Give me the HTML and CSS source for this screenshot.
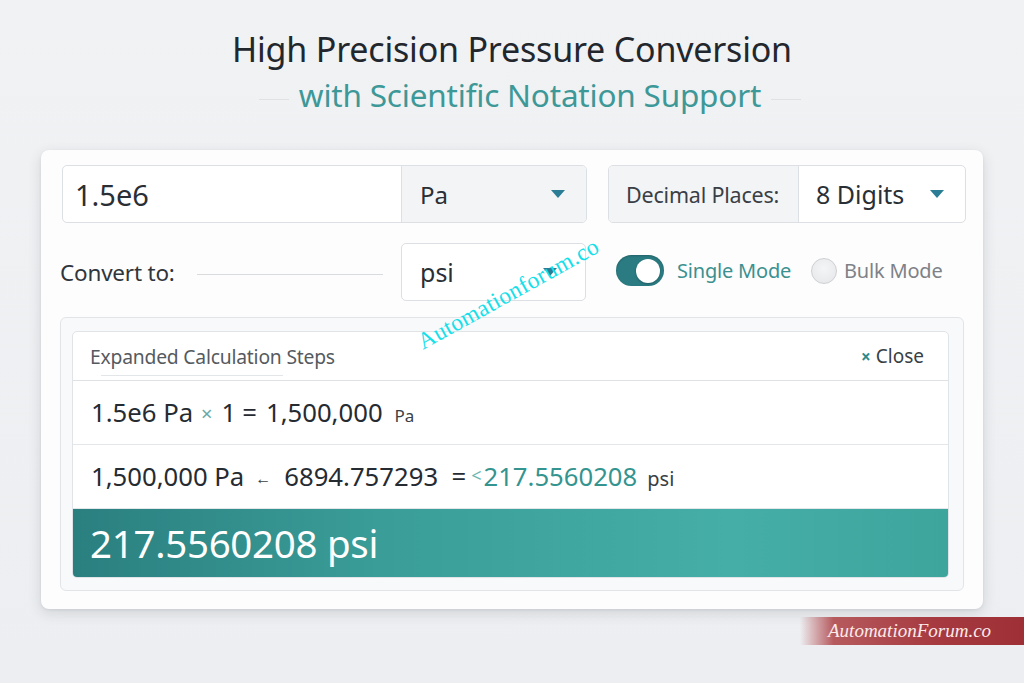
FILE: index.html
```html
<!DOCTYPE html>
<html>
<head>
<meta charset="utf-8">
<link rel="stylesheet" href="styles.css">
</head>
<body>
<header class="head">
  <h1 class="title">High Precision Pressure Conversion</h1>
  <div class="subtitle"><span class="sub-line"></span><span>with Scientific Notation Support</span><span class="sub-line"></span></div>
</header>

<main class="card">
  <div class="grid">
    <div class="field input-group">
      <div class="value-input">1.5e6</div>
      <div class="unit-select"><span>Pa</span><span class="tri"></span></div>
    </div>
    <div class="field decimal-group">
      <div class="dec-label">Decimal Places:</div>
      <div class="dec-value"><span>8 Digits</span><span class="tri"></span></div>
    </div>

    <div class="convert-row">
      <span class="convert-label">Convert to:</span>
      <span class="convert-line"></span>
      <div class="field psi-select"><span>psi</span><span class="tri"></span></div>
    </div>
    <div class="mode-row">
      <span class="toggle"><span class="knob"></span></span>
      <span class="mode-on">Single Mode</span>
      <span class="radio"></span>
      <span class="mode-off">Bulk Mode</span>
    </div>
  </div>

  <section class="panel">
    <div class="steps">
      <div class="steps-head">
        <span class="steps-title">Expanded Calculation Steps</span>
        <span class="close"><span class="close-x">×</span> Close</span>
      </div>
      <div class="step">1.5e6 Pa<span class="op">×</span>1<span class="eq">=</span>1,500,000<small>Pa</small></div>
      <div class="step">1,500,000 Pa<span class="op-dark">←</span>6894.757293 &nbsp;=<span class="lt">&lt;</span><span class="teal">217.5560208</span><small class="psi-small">psi</small></div>
      <div class="result">217.5560208 psi</div>
    </div>
  </section>

  <div class="watermark">Automationforum.co</div>
</main>

<div class="badge">AutomationForum.co</div>
</body>
</html>
```

FILE: styles.css
```css
* { box-sizing: border-box; }
html, body { margin: 0; padding: 0; }
body {
  width: 1024px;
  height: 683px;
  overflow: hidden;
  background: linear-gradient(180deg, #f1f2f4 0%, #eceef1 100%);
  font-family: "Noto Sans", "Open Sans", sans-serif;
  color: #2b3038;
  position: relative;
}
.head {
  padding-top: 26px;
  text-align: center;
}
.title {
  margin: 0;
  font-weight: 400;
  font-size: 34px;
  line-height: 46px;
  color: #22272e;
  letter-spacing: -0.2px;
}
.subtitle {
  display: flex;
  justify-content: center;
  align-items: center;
  gap: 10px;
  font-size: 31.5px;
  line-height: 42px;
  color: #3d9898;
  margin-top: 2px;
  padding-left: 36px;
  letter-spacing: -0.2px;
}
.sub-line {
  width: 30px;
  height: 1px;
  background: #dfe2e5;
  margin-top: 8px;
}
.card {
  position: relative;
  margin: 34px 41px 0 41px;
  height: 459px;
  background: #fdfdfd;
  border-radius: 8px;
  box-shadow: 0 4px 14px rgba(40, 50, 60, 0.14), 0 1px 3px rgba(40, 50, 60, 0.08);
  padding: 15px 19px 0 19px;
}
.grid {
  display: grid;
  grid-template-columns: 525px 358px;
  column-gap: 21px;
  row-gap: 20px;
  padding-left: 2px;
}
.field {
  border: 1px solid #dcdfe3;
  border-radius: 5px;
  background: #fff;
  display: flex;
  align-items: center;
  height: 58px;
}
.input-group { overflow: hidden; }
.value-input {
  flex: 0 0 339px;
  height: 100%;
  display: flex;
  align-items: center;
  padding-left: 12px;
  font-size: 29px;
  color: #2a2f36;
  border-right: 1px solid #dcdfe3;
}
.unit-select {
  flex: 1;
  height: 100%;
  background: #f3f4f6;
  display: flex;
  align-items: center;
  justify-content: space-between;
  padding: 0 21px 0 18px;
  font-size: 24px;
  color: #2a2f36;
}
.tri {
  width: 0;
  height: 0;
  border-left: 7px solid transparent;
  border-right: 7px solid transparent;
  border-top: 8px solid #2b7d96;
}
.decimal-group { overflow: hidden; }
.dec-label {
  flex: 0 0 190px;
  height: 100%;
  background: #f3f4f6;
  border-right: 1px solid #dcdfe3;
  display: flex;
  align-items: center;
  padding-left: 17px;
  font-size: 21.5px;
  color: #3a3f46;
  letter-spacing: -0.2px;
}
.dec-value {
  flex: 1;
  height: 100%;
  display: flex;
  align-items: center;
  justify-content: space-between;
  padding: 0 21px 0 17px;
  font-size: 25px;
  color: #2a2f36;
}
.convert-row {
  display: flex;
  align-items: center;
  margin-left: -2px;
}
.convert-label {
  font-size: 22.5px;
  color: #30353c;
  width: 137px;
  letter-spacing: -0.2px;
}
.convert-line {
  width: 186px;
  height: 1px;
  background: #d9dcdf;
  margin-top: 4px;
}
.psi-select {
  margin-left: 18px;
  width: 185px;
  height: 58px;
  justify-content: space-between;
  padding: 0 28px 0 18px;
  font-size: 25px;
  color: #2a2f36;
}
.mode-row {
  display: flex;
  align-items: center;
  padding-left: 8px;
  margin-top: -3px;
}
.toggle {
  width: 48px;
  height: 31px;
  border-radius: 16px;
  background: #2a7b82;
  display: flex;
  align-items: center;
  justify-content: flex-end;
  padding-right: 4px;
  box-shadow: inset 0 1px 2px rgba(0,0,0,0.2);
}
.knob {
  width: 24px;
  height: 24px;
  border-radius: 50%;
  background: #fff;
  box-shadow: 0 1px 2px rgba(0,0,0,0.25);
}
.mode-on {
  margin-left: 13px;
  font-size: 20px;
  color: #3a9190;
  letter-spacing: -0.2px;
}
.radio {
  margin-left: 20px;
  width: 26px;
  height: 26px;
  border-radius: 50%;
  border: 1.5px solid #cdd0d3;
  background: radial-gradient(circle at 50% 40%, #f4f5f6 0%, #e4e6e8 100%);
}
.mode-off {
  margin-left: 7px;
  font-size: 20px;
  color: #7d8288;
  letter-spacing: -0.2px;
}
.panel {
  margin-top: 16px;
  width: 904px;
  height: 274px;
  border: 1px solid #e2e5e8;
  border-radius: 6px;
  background: #f8f9fa;
  padding: 13px 14px 0 11px;
}
.steps {
  background: #fff;
  border: 1px solid #e1e4e7;
  border-radius: 5px;
  overflow: hidden;
  height: 247px;
  display: flex;
  flex-direction: column;
}
.steps-head {
  height: 49px;
  flex: 0 0 49px;
  display: flex;
  align-items: center;
  justify-content: space-between;
  padding: 0 24px 0 17px;
  border-bottom: 1px solid #dfe2e5;
  position: relative;
}
.steps-head::after {
  content: "";
  position: absolute;
  left: 28px;
  width: 182px;
  bottom: 4px;
  height: 1px;
  background: #e3e6e8;
}
.steps-title {
  font-size: 19.3px;
  color: #555a60;
  letter-spacing: -0.2px;
}
.close {
  font-size: 19px;
  color: #3a3f45;
}
.close-x {
  color: #2d8a8a;
  font-size: 17px;
  font-weight: 700;
}
.step {
  flex: 0 0 64px;
  height: 64px;
  display: flex;
  align-items: center;
  padding-left: 18px;
  font-size: 25.7px;
  color: #262b32;
  border-bottom: 1px solid #e4e7ea;
  white-space: pre;
  letter-spacing: 0;
}
.eq { margin: 0 9px 0 6px; }
.step small {
  font-size: 17px;
  margin-left: 12px;
  margin-top: 5px;
  color: #3a3f46;
}
.step small.psi-small { font-size: 20px; margin-left: 10px; margin-top: 4px; }
.op { color: #6aa9a6; font-size: 20px; margin: 2px 9px 0 8px; }
.op-dark { color: #3a3f46; font-size: 16px; margin: 2px 13px 0 11px; }
.lt { color: #6db5b0; font-size: 18px; margin: 0 2px 4px 5px; }
.teal { color: #34948f; }
.result {
  flex: 1;
  display: flex;
  align-items: center;
  padding-left: 17px;
  font-size: 38.5px;
  color: #ffffff;
  background: linear-gradient(90deg, #2a7f7f 0%, #3a9d98 35%, #45aea6 75%, #3ea59d 100%);
  letter-spacing: -0.3px;
}
.watermark {
  position: absolute;
  left: 385px;
  top: 178px;
  font-family: "Liberation Serif", serif;
  font-size: 23.5px;
  color: #14e0ea;
  transform: rotate(-29deg);
  transform-origin: left bottom;
  white-space: nowrap;
  letter-spacing: 0.3px;
}
.badge {
  position: absolute;
  left: 800px;
  top: 617px;
  width: 224px;
  height: 28px;
  background: linear-gradient(90deg, rgba(180, 60, 60, 0) 0%, #b65a5e 15%, #a63a40 60%, #9e2f36 100%);
  color: #fbeaea;
  font-family: "Liberation Serif", serif;
  font-style: italic;
  font-size: 19px;
  line-height: 28px;
  padding-left: 28px;
}
```
